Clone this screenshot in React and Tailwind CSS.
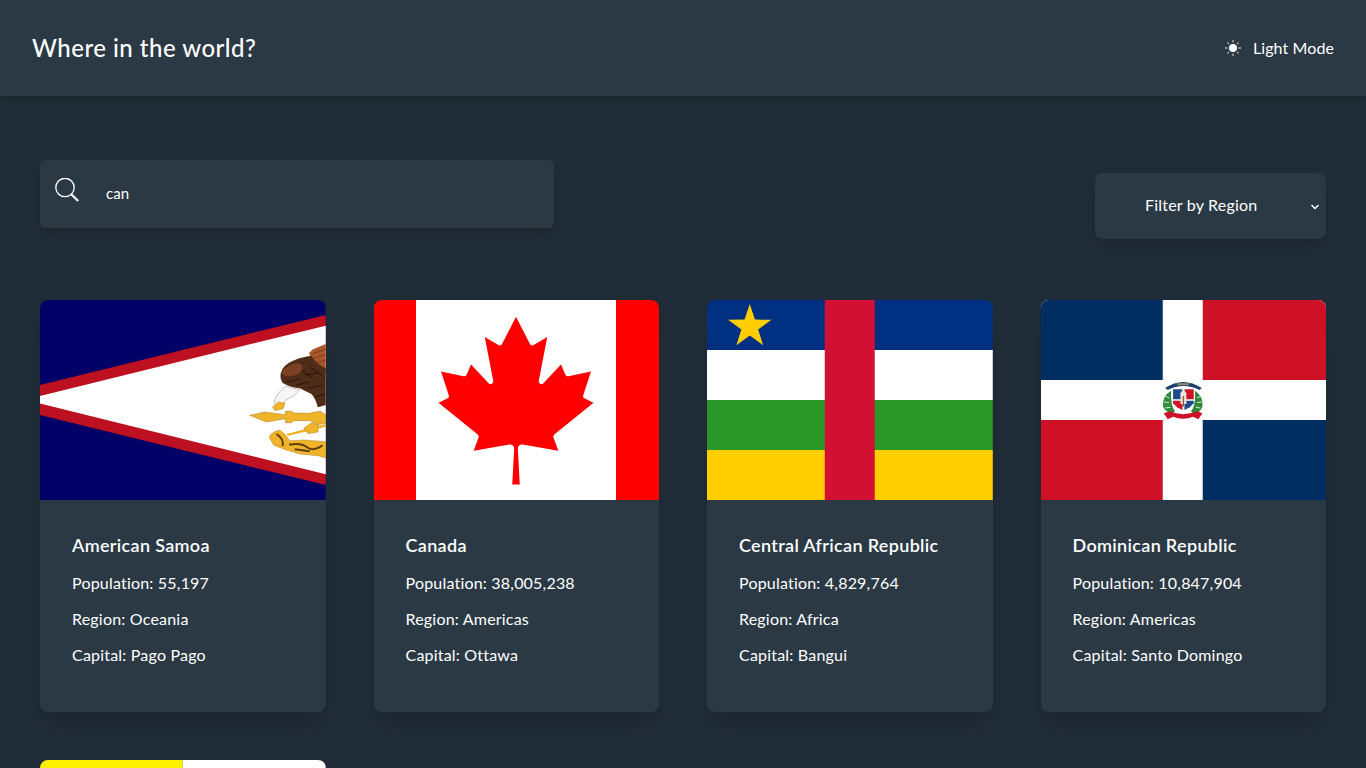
import { useState } from "react";

function SamoaFlag() {
  return (
    <svg viewBox="0 0 286 200" preserveAspectRatio="xMidYMid slice" className="w-full h-full block">
      <rect width="286" height="200" fill="#000066" />
      <path d="M0 85L286 15V185L0 115Z" fill="#bd1021" />
      <path d="M0 96L286 25.7V174.3L0 103.5Z" fill="#fff" />
      {/* eagle, drawn in zoomed-crop coordinates */}
      <g transform="translate(190 20) scale(.3333)">
        <path d="M238 98L250 88L288 72V160L255 150Z" fill="#a8562a" />
        <path d="M250 100L288 88M248 115L288 104M255 130L288 120" stroke="#6d3517" strokeWidth="2" fill="none" />
        <path d="M153 160Q158 135 190 122Q225 108 245 108Q258 130 288 145V255L264 262Q258 235 245 222L210 205Q175 200 158 188Q150 175 153 160Z" fill="#4f2c17" />
        <path d="M156 158Q170 132 205 130Q222 132 218 150Q200 172 165 168Z" fill="#7b4023" />
        <path d="M170 186L205 178M200 195L240 185M225 165L265 160M235 205L280 195M240 140L285 172M215 150L250 175M255 232L285 222" stroke="#1f1008" strokeWidth="2.5" fill="none" />
        <path d="M134 240Q145 215 168 198L190 205L210 208L192 228L168 240L160 252L136 254Z" fill="#f6f6f6" stroke="#888" strokeWidth="1.5" />
        <path d="M128 262L146 246L166 250L160 266L136 272Z" fill="#f0b429" stroke="#8a6414" strokeWidth="1" />
        <path d="M60 286L105 276L167 284V274H186L192 279L240 280L250 277L272 274L288 284V310L262 314L242 302H192L186 308H167V296L110 306Z" fill="#f0b429" stroke="#8a6414" strokeWidth="1.2" />
        <path d="M170 342L240 324L288 312V320L240 332L175 347Z" fill="#f0b429" />
        <path d="M222 325L245 308L265 315V336L235 341Z" fill="#f0b429" stroke="#8a6414" strokeWidth="1" />
        <path d="M118 352Q125 335 150 330L168 345L180 362L225 360L288 365V414L268 408L210 402Q170 392 132 376Z" fill="#f0b429" stroke="#8a6414" strokeWidth="1" />
        <path d="M140 342Q165 358 158 378M178 374Q215 368 232 382T278 376M195 388L240 394" fill="none" stroke="#5f3d12" strokeWidth="6" />
      </g>
    </svg>
  );
}

function CanadaFlag() {
  return (
    <svg viewBox="1392 0 6852 4800" preserveAspectRatio="xMidYMid slice" className="w-full h-full block">
      <rect width="9600" height="4800" fill="#f00" />
      <rect x="2400" width="4800" height="4800" fill="#fff" />
      <path
        fill="#f00"
        d="M4890 4430l-45-863a95 95 0 0 1 111-98l859 151-116-320a65 65 0 0 1 20-73l941-762-212-99a65 65 0 0 1-34-79l186-572-542 115a65 65 0 0 1-73-38l-105-247-423 454a65 65 0 0 1-111-57l204-1052-327 189a65 65 0 0 1-91-27l-332-652-332 652a65 65 0 0 1-91 27l-327-189 204 1052a65 65 0 0 1-111 57l-423-454-105 247a65 65 0 0 1-73 38l-542-115 186 572a65 65 0 0 1-34 79l-212 99 941 762a65 65 0 0 1 20 73l-116 320 859-151a95 95 0 0 1 111 98l-45 863z"
      />
    </svg>
  );
}

function CarFlag() {
  return (
    <svg viewBox="0 0 286 200" preserveAspectRatio="xMidYMid slice" className="w-full h-full block">
      <rect width="286" height="50" fill="#003082" />
      <rect y="50" width="286" height="50" fill="#fff" />
      <rect y="100" width="286" height="50" fill="#289728" />
      <rect y="150" width="286" height="50" fill="#ffce00" />
      <rect x="118" width="50" height="200" fill="#d21034" />
      <path d="M43 4L48.2 19.6L64.7 19.7L51.4 29.5L56.4 45.2L43 35.6L29.6 45.2L34.6 29.5L21.3 19.7L37.8 19.6Z" fill="#ffce00" />
    </svg>
  );
}

function DominicanFlag() {
  return (
    <svg viewBox="0 0 286 200" preserveAspectRatio="xMidYMid slice" className="w-full h-full block">
      <rect width="286" height="200" fill="#fff" />
      <rect width="122" height="80" fill="#002d62" />
      <rect x="162" width="124" height="80" fill="#ce1126" />
      <rect y="120" width="122" height="80" fill="#ce1126" />
      <rect x="162" y="120" width="124" height="80" fill="#002d62" />
      {/* coat of arms */}
      <g transform="translate(99 60) scale(.3333)">
        <path d="M76 84Q130 48 186 84L180 90Q130 66 84 90Z" fill="#1d3d6b" />
        <path d="M110 70L150 70L146 76L114 76Z" fill="#8a8f6a" />
        <path d="M100 88H128V118H100Z" fill="#1e4a8a" />
        <path d="M134 88H162V118H134Z" fill="#ce1126" />
        <path d="M100 122H128V150L112 142L100 130Z" fill="#ce1126" />
        <path d="M134 122H162V130L150 142L134 150Z" fill="#1e4a8a" />
        <path d="M122 100L131 86L140 100V132H122Z" fill="#e8e4d8" />
        <path d="M129 108H133V140H129Z" fill="#a0522d" />
        <path d="M94 92Q66 108 70 140Q76 156 98 160L106 154Q92 138 94 92Z" fill="#2f8a3c" />
        <path d="M166 92Q192 110 188 140Q182 158 162 162L154 154Q168 138 166 92Z" fill="#2f8a3c" />
        <path d="M76 108L88 114M72 126L88 128M76 144L92 142M184 108L172 114M186 126L172 128M182 144L168 142" stroke="#d8e8d0" strokeWidth="3" />
        <path d="M72 160L90 154Q130 172 172 154L188 160L176 178L160 170Q130 182 100 170L84 178Z" fill="#ce1126" />
      </g>
    </svg>
  );
}

function YellowWhiteFlag() {
  return (
    <svg viewBox="0 0 286 200" preserveAspectRatio="xMidYMid slice" className="w-full h-full block">
      <rect width="143" height="200" fill="#fff200" />
      <rect x="143" width="143" height="200" fill="#fff" />
    </svg>
  );
}

const countries = [
  { name: "American Samoa", population: "55,197", region: "Oceania", capital: "Pago Pago", Flag: SamoaFlag },
  { name: "Canada", population: "38,005,238", region: "Americas", capital: "Ottawa", Flag: CanadaFlag },
  { name: "Central African Republic", population: "4,829,764", region: "Africa", capital: "Bangui", Flag: CarFlag },
  { name: "Dominican Republic", population: "10,847,904", region: "Americas", capital: "Santo Domingo", Flag: DominicanFlag },
  { Flag: YellowWhiteFlag },
];

function SunIcon() {
  return (
    <svg viewBox="0 0 16 16" className="w-4 h-4" fill="#fff">
      <circle cx="8" cy="8" r="4" />
      <path d="M8 0v2.6M8 13.4V16M0 8h2.6M13.4 8H16M2.4 2.4l1.5 1.5M12.1 12.1l1.5 1.5M2.4 13.6l1.5-1.5M12.1 3.9l1.5-1.5" stroke="#fff" strokeWidth="1.4" opacity=".6" />
    </svg>
  );
}

function SearchIcon() {
  return (
    <svg viewBox="0 0 24 24" className="w-6 h-6 mb-2" fill="none" stroke="#fff">
      <circle cx="10" cy="9.5" r="9.2" strokeWidth="1.3" />
      <path d="M16 16l7.2 7" strokeWidth="2.2" />
    </svg>
  );
}

function CountryCard({ country }) {
  const { Flag } = country;
  return (
    <article className="bg-[#2b3945] rounded-lg overflow-hidden shadow-xl">
      <div className="h-[200px]">
        <Flag />
      </div>
      {country.name && (
        <div className="h-[212px] px-8 pt-[31px] tracking-[0.2px]">
          <h2 className="text-lg leading-7 font-semibold mb-[6px] tracking-[0.33px]">{country.name}</h2>
          <p className="h-9 leading-9">Population: {country.population}</p>
          <p className="h-9 leading-9">Region: {country.region}</p>
          <p className="h-9 leading-9">Capital: {country.capital}</p>
        </div>
      )}
    </article>
  );
}

export default function App() {
  const [query, setQuery] = useState("can");

  return (
    <div className="h-screen overflow-hidden bg-[#202c37] text-white font-['Lato',sans-serif]">
      <header className="h-24 bg-[#2b3945] shadow-md flex items-center justify-between px-8">
        <h1 className="text-2xl font-medium tracking-[0.49px]">Where in the world?</h1>
        <button className="flex items-center gap-3 text-white tracking-[0.1px]">
          <SunIcon />
          <span>Light Mode</span>
        </button>
      </header>

      <main className="px-10 pt-16">
        <div className="flex items-start justify-between h-[140px]">
          <label className="w-[514px] h-[68px] bg-[#2b3945] rounded-md shadow-lg flex items-center pl-[15px] gap-[27px]">
            <SearchIcon />
            <input
              value={query}
              onChange={(e) => setQuery(e.target.value)}
              className="bg-transparent outline-none flex-1 text-[15px] tracking-[0.1px] pb-[2px]"
            />
          </label>
          <div className="relative w-[231px] h-[66px] mt-[13px]">
            <select className="appearance-none w-full h-full bg-[#2b3945] rounded-lg shadow-lg pl-[50px] pb-[2px] text-white outline-none text-base tracking-[0.2px]">
              <option>Filter by Region</option>
              <option>Africa</option>
              <option>Americas</option>
              <option>Asia</option>
              <option>Europe</option>
              <option>Oceania</option>
            </select>
            <svg viewBox="0 0 10 6" className="absolute right-[6px] top-[31px] w-[10px] h-[6px] pointer-events-none" fill="none" stroke="#fff" strokeWidth="1.4">
              <path d="M1.5 1L5 4.5L8.5 1" />
            </svg>
          </div>
        </div>

        <section className="grid grid-cols-4 gap-12">
          {countries.map((c, i) => (
            <CountryCard key={i} country={c} />
          ))}
        </section>
      </main>
    </div>
  );
}
